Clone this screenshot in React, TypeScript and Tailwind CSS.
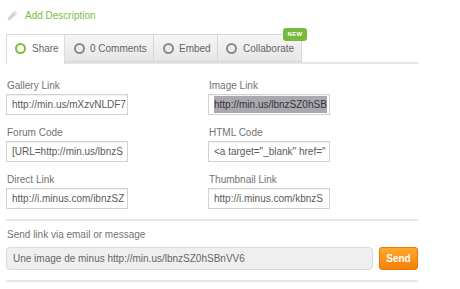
import React from "react"

const Ring = ({ active }: { active?: boolean }) => (
  <span
    className={
      "block h-[11px] w-[11px] shrink-0 rounded-full border-2 " +
      (active ? "border-[#7cc03a]" : "border-[#8a8a8a]")
    }
  />
)

function Field({ label, value, selected }: { label: string; value: string; selected?: boolean }) {
  return (
    <div className="flex flex-col">
      <div className="h-[12px] leading-[12px] pl-[1px] text-[#727272]">{label}</div>
      <div className="mt-[2px] flex h-[21px] w-[122px] items-center overflow-hidden whitespace-nowrap border border-[#d2d2d2] bg-white pl-[5px] text-[#5a5a5a] shadow-[inset_0_1px_1px_rgba(0,0,0,0.06)]">
        {selected ? <span className="bg-[#a9a9ae] py-[1px] text-[#3a2f40]">{value}</span> : value}
      </div>
    </div>
  )
}

export default function App() {
  return (
    <div className="h-[289px] w-[460px] overflow-hidden bg-white pl-[6px] font-['Liberation_Sans',Arial,sans-serif] text-[10px]">
      {/* Add description */}
      <div className="flex h-[34px] items-center pb-[4px]">
        <svg width="11" height="11" viewBox="0 0 11 11" className="ml-[1px]">
          <path d="M7.6 0.8 L10.2 3.4 L3.8 9.8 L0.6 10.4 L1.2 7.2 Z" fill="#d4d4d4" />
          <path d="M6.6 1.8 L9.2 4.4" stroke="#ffffff" strokeWidth="0.8" />
        </svg>
        <span className="ml-[7px] text-[#7cc03a]">Add Description</span>
      </div>

      {/* Tabs */}
      <div className="relative flex w-[412px] border-b-2 border-[#e4e4e4]">
        <div className="-mb-[2px] flex h-[30px] w-[59px] items-center gap-[6px] border border-b-0 border-[#dcdcdc] bg-white pb-[2px] pl-[8px] text-[#666]">
          <Ring active />
          <span>Share</span>
        </div>
        <div className="flex h-[28px] w-[89px] items-center gap-[5px] border-y border-r border-[#d6d6d6] bg-gradient-to-b from-[#f6f6f6] to-[#e6e6e6] pl-[9px] text-[#666]">
          <Ring />
          <span>0 Comments</span>
        </div>
        <div className="flex h-[28px] w-[64px] items-center gap-[5px] border-y border-r border-[#d6d6d6] bg-gradient-to-b from-[#f6f6f6] to-[#e6e6e6] pl-[9px] text-[#666]">
          <Ring />
          <span>Embed</span>
        </div>
        <div className="relative flex h-[28px] w-[84px] items-center gap-[6px] border-y border-r border-[#d6d6d6] bg-gradient-to-b from-[#f6f6f6] to-[#e6e6e6] pl-[8px] text-[#666]">
          <Ring />
          <span>Collaborate</span>
          <span className="absolute -top-[7px] right-[-6px] flex h-[13px] w-[24px] items-center justify-center rounded-[3px] bg-[#78b83a] text-[6px] font-bold tracking-[0.3px] text-white">
            NEW
          </span>
        </div>
      </div>

      {/* Links */}
      <div className="mt-[16px] grid w-[412px] grid-cols-[202px_1fr] gap-y-[12px]">
        <Field label="Gallery Link" value="http://min.us/mXzvNLDF7" />
        <Field label="Image Link" value="http://min.us/lbnzSZ0hSB" selected />
        <Field label="Forum Code" value="[URL=http://min.us/lbnzS" />
        <Field label="HTML Code" value={'<a target="_blank" href="'} />
        <Field label="Direct Link" value="http://i.minus.com/ibnzSZ" />
        <Field label="Thumbnail Link" value="http://i.minus.com/kbnzS" />
      </div>

      <div className="mt-[10px] h-[2px] w-[412px] bg-[#e6e6e6]" />

      {/* Send */}
      <div className="mt-[8px] h-[12px] pl-[1px] leading-[12px] text-[#727272]">Send link via email or message</div>
      <div className="mt-[6px] flex w-[412px] items-center">
        <div className="flex h-[23px] w-[367px] items-center overflow-hidden whitespace-nowrap rounded-[4px] border border-[#dadada] bg-[#efefef] pl-[6px] text-[#666]">
          Une image de minus http://min.us/lbnzSZ0hSBnVV6
        </div>
        <button className="ml-[6px] flex h-[23px] w-[39px] items-center justify-center rounded-[3px] border border-[#e9780a] bg-gradient-to-b from-[#ffa92a] to-[#f67f02] text-[10px] font-bold text-white">
          Send
        </button>
      </div>

      <div className="mt-[10px] h-[2px] w-[412px] bg-[#e6e6e6]" />
    </div>
  )
}
